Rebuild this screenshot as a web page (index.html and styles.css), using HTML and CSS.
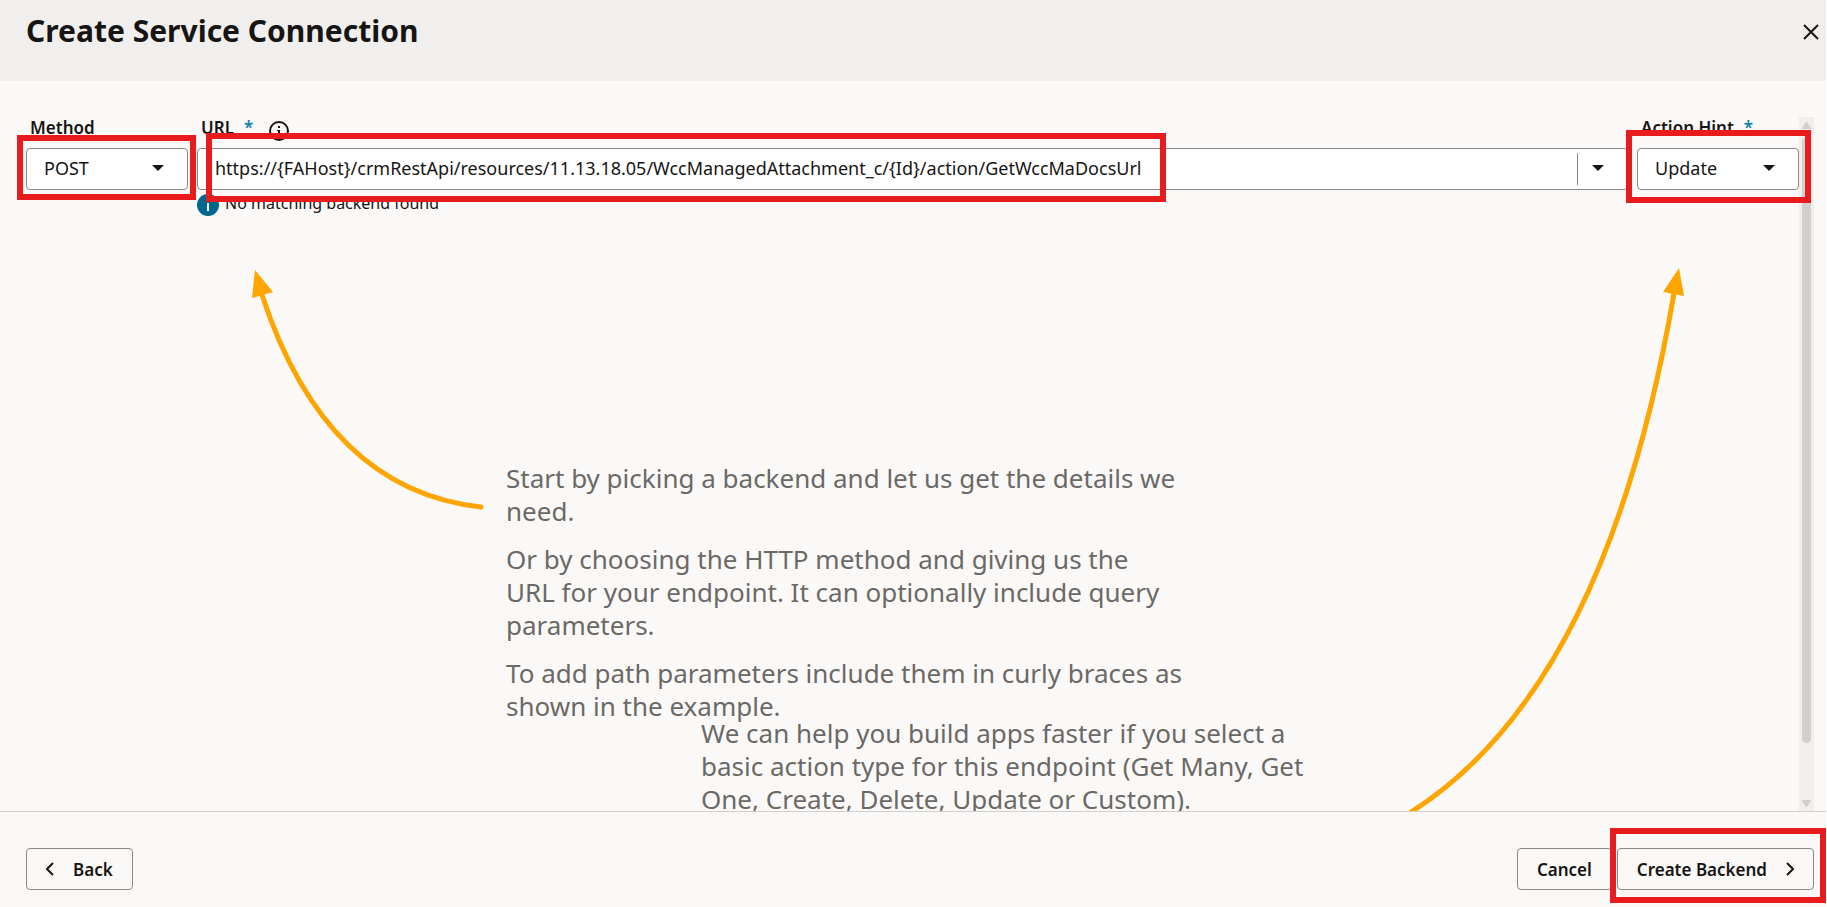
FILE: index.html
```html
<!DOCTYPE html>
<html lang="en">
<head>
<meta charset="utf-8">
<title>Create Service Connection</title>
<link rel="stylesheet" href="styles.css">
</head>
<body>
<div class="dialog" role="dialog" aria-labelledby="dialog-title">
  <header class="dialog-header">
    <h1 class="dialog-title" id="dialog-title">Create Service Connection</h1>
    <button class="close-button" type="button" aria-label="Close">
      <svg width="16" height="16" viewBox="0 0 16 16"><path d="M1 1 15 15M15 1 1 15" fill="none" stroke="#161513" stroke-width="2"/></svg>
    </button>
  </header>

  <main class="dialog-body">
    <div class="scroll-content">
      <form class="endpoint-form">
        <div class="field field-method">
          <div class="label-row"><label for="method">Method</label></div>
          <div class="control">
            <select id="method" class="select"><option>POST</option></select>
            <svg class="caret" width="12" height="6" viewBox="0 0 12 6"><path d="M0 0H12L6 6Z" fill="#161513"/></svg>
            <span class="highlight highlight-method"></span>
          </div>
        </div>

        <div class="field field-url">
          <div class="label-row">
            <label for="url">URL</label>
            <span class="required">*</span>
            <svg class="info-outline" width="20" height="20" viewBox="0 0 20 20"><circle cx="10" cy="10" r="9" fill="none" stroke="#161513" stroke-width="2"/><path d="M9 5h2v2H9ZM8 9h3v6H9v-5H8Z" fill="#161513"/></svg>
          </div>
          <div class="control combo">
            <input id="url" class="url-input" type="text" value="https://{FAHost}/crmRestApi/resources/11.13.18.05/WccManagedAttachment_c/{Id}/action/GetWccMaDocsUrl">
            <button class="combo-toggle" type="button" aria-label="Show backends">
              <svg width="12" height="6" viewBox="0 0 12 6"><path d="M0 0H12L6 6Z" fill="#161513"/></svg>
            </button>
            <span class="highlight highlight-url"></span>
          </div>
          <p class="field-message">
            <svg width="22" height="22" viewBox="0 0 22 22"><circle cx="11" cy="11" r="11" fill="#00688c"/><path d="M10 5h2v2h-2ZM10 9h2v8h-2Z" fill="#fff"/></svg>
            <span>No matching backend found</span>
          </p>
        </div>

        <div class="field field-hint">
          <div class="label-row">
            <label for="hint">Action Hint</label>
            <span class="required">*</span>
          </div>
          <div class="control">
            <select id="hint" class="select"><option>Update</option></select>
            <svg class="caret" width="12" height="6" viewBox="0 0 12 6"><path d="M0 0H12L6 6Z" fill="#161513"/></svg>
            <span class="highlight highlight-hint"></span>
          </div>
        </div>
      </form>

      <section class="guide">
        <div class="guide-text guide-url">
          <p>Start by picking a backend and let us get the details we need.</p>
          <p>Or by choosing the HTTP method and giving us the URL&nbsp;for your endpoint. It can optionally include query parameters.</p>
          <p>To add path parameters include them in curly braces as shown in the example.</p>
        </div>
        <div class="guide-text guide-hint">
          <p>We can help you build apps faster if you select a basic action type for this endpoint (Get Many, Get One, Create, Delete, Update or Custom).</p>
        </div>
      </section>

      <svg class="arrow arrow-url" width="240" height="250" viewBox="0 0 240 250">
        <path d="M22 30Q86 225 241 242" fill="none" stroke="#ffa500" stroke-width="5" stroke-linecap="round"/>
        <path d="M15 5 12 33 33 27Z" fill="#ffa500"/>
      </svg>
      <svg class="arrow arrow-hint" width="300" height="560" viewBox="0 0 300 560">
        <path d="M274 33Q206 431 8 554" fill="none" stroke="#ffa500" stroke-width="5"/>
        <path d="M279 8 263 32 284 36Z" fill="#ffa500"/>
      </svg>
    </div>

    <div class="scrollbar" aria-hidden="true">
      <svg width="9" height="8" viewBox="0 0 9 8"><path d="M4 0H5L9 6V7H0V6Z" fill="#d2d0ce"/></svg>
      <div class="scroll-track"><div class="scroll-thumb"></div></div>
      <svg width="9" height="8" viewBox="0 0 9 8"><path d="M4 8H5L9 2V1H0V2Z" fill="#d2d0ce"/></svg>
    </div>
  </main>

  <footer class="dialog-footer">
    <button class="button" type="button">
      <svg width="8" height="14" viewBox="0 0 8 14"><path d="M7 1 1 7 7 13" fill="none" stroke="#161513" stroke-width="2"/></svg>
      Back
    </button>
    <div class="footer-actions">
      <button class="button" type="button">Cancel</button>
      <div class="control">
        <button class="button" type="button">
          Create Backend
          <svg width="8" height="14" viewBox="0 0 8 14"><path d="M1 1 7 7 1 13" fill="none" stroke="#161513" stroke-width="2"/></svg>
        </button>
        <span class="highlight highlight-create"></span>
      </div>
    </div>
  </footer>
</div>
</body>
</html>
```
FILE: styles.css
```css
* {
  box-sizing: border-box;
}

body {
  margin: 0;
  background: #fff;
  color: #161513;
  font-family: "Noto Sans", "Open Sans", sans-serif;
  font-size: 18px;
}

svg {
  display: block;
  flex: none;
}

.dialog {
  display: flex;
  flex-direction: column;
  height: 100vh;
  margin-right: 1px;
  background: #fbf9f8;
}

.dialog-header {
  display: flex;
  justify-content: space-between;
  align-items: flex-start;
  padding: 9px 3px 28px 26px;
  background: #f1efed;
}

.dialog-title {
  margin: 0;
  font-size: 30px;
  line-height: 44px;
  font-weight: 700;
}

.close-button {
  padding: 4px;
  margin-top: 11px;
  border: 0;
  background: none;
}

.dialog-body {
  flex: 1;
  min-height: 0;
  display: flex;
  padding: 36px 12px 0 0;
}

.scroll-content {
  position: relative;
  z-index: 1;
  flex: 1;
  min-width: 0;
  overflow-x: visible;
  overflow-y: clip;
  padding-left: 26px;
}

.endpoint-form {
  display: flex;
  gap: 9px;
}

.field-method,
.field-hint {
  flex: 0 0 162px;
}

.field-url {
  flex: 1;
  min-width: 0;
}

.label-row {
  display: flex;
  align-items: flex-start;
  gap: 10px;
  height: 31px;
  padding-left: 4px;
  font-size: 17px;
  line-height: 21px;
  font-weight: 600;
}

.required {
  color: #1482a8;
}

.info-outline {
  margin: 4px 0 0 6px;
}

.control {
  position: relative;
}

.select {
  display: block;
  width: 100%;
  height: 42px;
  padding: 0 18px 3px 17px;
  border: 1px solid #8b8885;
  border-radius: 4px;
  background: #fff;
  color: inherit;
  font: inherit;
  appearance: none;
}

.caret {
  position: absolute;
  top: 17px;
  right: 24px;
  pointer-events: none;
}

.combo {
  display: flex;
  align-items: center;
  height: 42px;
  border: 1px solid #8b8885;
  border-radius: 4px;
  background: #fff;
}

.url-input {
  flex: 1;
  min-width: 0;
  height: 40px;
  padding: 0 18px 3px 17px;
  border: 0;
  background: none;
  color: inherit;
  font: inherit;
}

.combo-toggle {
  height: 32px;
  padding: 0 23px 2px 14px;
  border: 0;
  border-left: 1px solid #8b8885;
  background: none;
}

.field-message {
  display: flex;
  align-items: flex-start;
  gap: 6px;
  margin: 4px 0 0;
  font-size: 16px;
  line-height: 18px;
}

.highlight {
  position: absolute;
  z-index: 1;
  border: 6px solid #e81c1c;
  pointer-events: none;
}

.highlight-method {
  inset: -13px -8px -10px -9px;
}

.highlight-url {
  inset: -16px auto -13px 8px;
  width: 960px;
}

.highlight-hint {
  inset: -18px -12px -13px -11px;
}

.highlight-create {
  inset: -20px -12px -13px -7px;
}

.guide {
  padding: 246px 0 0 480px;
  color: #6b6966;
  font-size: 26px;
  line-height: 33px;
}

.guide-text p {
  margin: 0 0 15px;
}

.guide-url {
  width: 680px;
}

.guide-url p:last-child {
  margin-bottom: 0;
}

.guide-hint {
  width: 610px;
  margin: -6px 0 0 195px;
}

.arrow {
  position: absolute;
  overflow: visible;
  pointer-events: none;
}

.arrow-url {
  top: 148px;
  left: 240px;
}

.arrow-hint {
  top: 143px;
  right: 99px;
}

.scrollbar {
  flex: 0 0 15px;
  display: flex;
  flex-direction: column;
  align-items: center;
  padding: 5px 3px 4px;
  background: #f1efed;
}

.scroll-track {
  flex: 1;
  width: 9px;
  padding: 7px 0;
}

.scroll-thumb {
  height: 92.5%;
  border-radius: 5px;
  background: #d2d0ce;
}

.dialog-footer {
  display: flex;
  justify-content: space-between;
  padding: 36px 12px 17px 26px;
  border-top: 1px solid #d2d0ce;
}

.footer-actions {
  display: flex;
  gap: 5px;
}

.button {
  display: flex;
  align-items: center;
  gap: 19px;
  height: 42px;
  padding: 0 19px;
  border: 1px solid #8b8885;
  border-radius: 4px;
  background: #fbf9f8;
  color: inherit;
  font: inherit;
  font-size: 17px;
  font-weight: 600;
  white-space: nowrap;
}
```
